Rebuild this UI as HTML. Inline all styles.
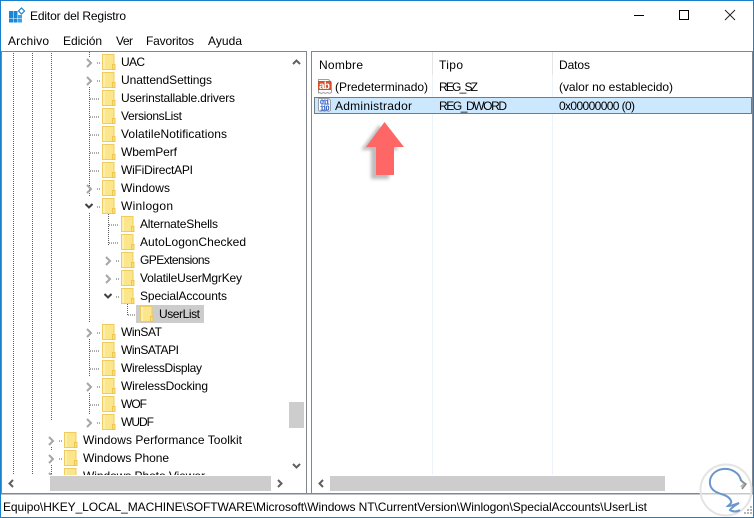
<!DOCTYPE html>
<html><head><meta charset="utf-8"><style>
html,body{margin:0;padding:0;background:#fff;overflow:hidden}
svg{display:block}
text{font-family:"Liberation Sans",sans-serif;font-size:12px;fill:#000}
.d{stroke:#5a5a5a;stroke-width:1;stroke-dasharray:1 1;fill:none;shape-rendering:crispEdges}
.c{fill:none;stroke:#a6a6a6;stroke-width:2}
.e{fill:none;stroke:#404040;stroke-width:2}
.s{fill:none;stroke:#606060;stroke-width:2}
</style></head><body>
<svg width="754" height="518" viewBox="0 0 754 518" xmlns="http://www.w3.org/2000/svg">
<defs>
<g id="f"><rect x=".5" y=".5" width="11.5" height="15" fill="#fce68c" stroke="#f0cb5e"/><rect x="1" y="1" width="2" height="14" fill="#fdefb0"/><rect x="10.500" y="10.500" width="2.500" height="5" fill="#fbe07a" stroke="#efc550"/></g>
<clipPath id="t"><rect x="2" y="52" width="304" height="423"/></clipPath>
<filter id="b" x="-30%" y="-30%" width="160%" height="160%"><feGaussianBlur stdDeviation="1.5"/></filter>
</defs>
<rect width="754" height="518" fill="#fff"/>

<!-- title bar -->
<g fill="#1b86d6"><rect x="9" y="11" width="4" height="4"/><rect x="13.500" y="11" width="4" height="4"/><rect x="9" y="15" width="4" height="3.500"/><rect x="13.500" y="15" width="4" height="3.500"/><rect x="18" y="15" width="4" height="3.500" fill="#3aa0e8"/><rect x="9" y="19" width="4" height="3.500"/><rect x="13.500" y="19" width="4" height="3.500"/><rect x="18" y="19" width="4" height="3.500" fill="#3aa0e8"/></g>
<path d="M21.500 8l3 3-3 3-3-3z" fill="#fff" stroke="#1b84cf" stroke-width="1.200"/>
<text x="30" y="20" textLength="96">Editor del Registro</text>
<path d="M634 15.500h10" stroke="#000" fill="none"/>
<rect x="679.500" y="10.500" width="9" height="9" fill="none" stroke="#000"/>
<path d="M725 10l10 10M735 10l-10 10" stroke="#222" fill="none"/>

<!-- menu -->
<text x="8" y="45" textLength="41">Archivo</text>
<text x="63" y="45" textLength="39">Edición</text>
<text x="116" y="45" textLength="17">Ver</text>
<text x="146" y="45" textLength="48">Favoritos</text>
<text x="208" y="45" textLength="34">Ayuda</text>

<!-- tree -->
<g clip-path="url(#t)">
<path class="d" d="M13.500 53V474M32.500 53V474M51.500 53V421M51.500 447v3M51.500 465v10"/>
<path class="d" d="M89.500 52v5M89.500 87v109M89.500 213v110M89.500 339v38M89.500 393v21"/>
<path class="d" d="M90 99h10M90 117h10M90 135h10M90 153h10M90 171h10M90 351h10M90 369h10M90 405h10"/>
<path class="d" d="M97 63h3M97 81h3M97 189h3M97 207h3M97 333h3M97 387h3M97 423h3M59 441h3M59 459h3"/>
<path class="d" d="M108.500 214v31M109 225h10M109 243h10M116 261h3M116 279h3M116 297h3"/>
<path class="d" d="M127.500 304v11M128 315h10"/>

<g>
<path class="c" d="M87 59l4 4-4 4M87 77l4 4-4 4M87 185l4 4-4 4M87 329l4 4-4 4M87 383l4 4-4 4M87 419l4 4-4 4M106 257l4 4-4 4M106 275l4 4-4 4M49 437l4 4-4 4M49 455l4 4-4 4M49 473l4 4-4 4"/>
<path class="e" d="M85.500 204l3.500 3.500 3.500-3.500M104.500 294l3.500 3.500 3.500-3.500"/>
</g>

<use href="#f" x="102" y="54"/><use href="#f" x="102" y="72"/><use href="#f" x="102" y="90"/><use href="#f" x="102" y="108"/><use href="#f" x="102" y="126"/><use href="#f" x="102" y="144"/><use href="#f" x="102" y="162"/><use href="#f" x="102" y="180"/><use href="#f" x="102" y="198"/>
<use href="#f" x="121" y="216"/><use href="#f" x="121" y="234"/><use href="#f" x="121" y="252"/><use href="#f" x="121" y="270"/><use href="#f" x="121" y="288"/>
<rect x="136" y="305" width="68" height="18" fill="#cccccc"/>
<use href="#f" x="140" y="306"/>
<use href="#f" x="102" y="324"/><use href="#f" x="102" y="342"/><use href="#f" x="102" y="360"/><use href="#f" x="102" y="378"/><use href="#f" x="102" y="396"/><use href="#f" x="102" y="414"/>
<use href="#f" x="64" y="432"/><use href="#f" x="64" y="450"/><use href="#f" x="64" y="468"/>

<text x="121" y="66" textLength="24">UAC</text>
<text x="121" y="84" textLength="91">UnattendSettings</text>
<text x="121" y="102" textLength="114">Userinstallable.drivers</text>
<text x="121" y="120" textLength="61">VersionsList</text>
<text x="121" y="138" textLength="106">VolatileNotifications</text>
<text x="121" y="156" textLength="56">WbemPerf</text>
<text x="121" y="174" textLength="72">WiFiDirectAPI</text>
<text x="121" y="192" textLength="49">Windows</text>
<text x="121" y="210" textLength="52">Winlogon</text>
<text x="140" y="228" textLength="78">AlternateShells</text>
<text x="140" y="246" textLength="106">AutoLogonChecked</text>
<text x="140" y="264" textLength="70">GPExtensions</text>
<text x="140" y="282" textLength="102">VolatileUserMgrKey</text>
<text x="140" y="300" textLength="87">SpecialAccounts</text>
<text x="159" y="318" textLength="41">UserList</text>
<text x="121" y="336" textLength="41">WinSAT</text>
<text x="121" y="354" textLength="58">WinSATAPI</text>
<text x="121" y="372" textLength="81">WirelessDisplay</text>
<text x="121" y="390" textLength="87">WirelessDocking</text>
<text x="121" y="408" textLength="26">WOF</text>
<text x="121" y="426" textLength="33">WUDF</text>
<text x="83" y="444" textLength="159">Windows Performance Toolkit</text>
<text x="83" y="462" textLength="86">Windows Phone</text>
<text x="83" y="480" textLength="122">Windows Photo Viewer</text>
</g>

<!-- tree scrollbars -->
<rect x="288" y="52" width="18" height="424" fill="#fff"/>
<rect x="2" y="475" width="304" height="18" fill="#fff"/>
<rect x="289" y="402" width="15" height="26" fill="#cdcdcd"/>
<rect x="50" y="476" width="221" height="15" fill="#cdcdcd"/>
<path class="s" d="M293 64l3.500-3.500 3.500 3.500M293 464l3.500 3.500 3.500-3.500M13 480l-3.500 3.500 3.500 3.500M278 480l3.500 3.500-3.500 3.500"/>

<!-- panel borders -->
<path d="M1.500 51.500H306.500V493.500M1.500 51V494" fill="none" stroke="#82878f"/>
<path d="M311.500 494V51.500H752.500V494" fill="none" stroke="#82878f"/>

<!-- list view -->
<path d="M432.500 52V75M552.500 52V75" stroke="#e5e5e5"/>
<path d="M432.500 75V475M552.500 75V475" stroke="#eef3f9"/>
<text x="319" y="69" textLength="44">Nombre</text>
<text x="439" y="69" textLength="24">Tipo</text>
<text x="559" y="69" textLength="31">Datos</text>

<path d="M318.500 79.500h10l3 3v10l-2 1-2-1-2 1-2-1-2 1-2-1-1 .5z" fill="#fff" stroke="#a0a0a0"/>
<rect x="318" y="81" width="13" height="9" fill="#d6502b"/>
<text x="319" y="89" style="font-size:10px;font-weight:bold;fill:#fff" textLength="11">ab</text>
<text x="335" y="91" textLength="93">(Predeterminado)</text>
<text x="439" y="91" textLength="39">REG_SZ</text>
<text x="559" y="91" textLength="114">(valor no establecido)</text>

<rect x="314" y="97" width="438" height="17" fill="#cce8ff"/>
<rect x="314.500" y="97.500" width="437" height="16" fill="none" stroke="#111" stroke-dasharray="1 1" shape-rendering="crispEdges"/>
<path d="M318.500 98.500h10l2 2v10l-2 1-2-1-2 1-2-1-2 1-2-1z" fill="#fff" stroke="#9aa0a8"/>
<text x="320" y="104.500" style="font-size:7px;font-weight:bold;fill:#1c4fc0" textLength="9.500">011</text>
<text x="320" y="110.500" style="font-size:7px;font-weight:bold;fill:#1c4fc0" textLength="9.500">110</text>
<text x="335" y="110" textLength="77">Administrador</text>
<text x="439" y="110" textLength="68">REG_DWORD</text>
<text x="559" y="110" textLength="76">0x00000000 (0)</text>

<!-- arrow -->
<path d="M379 125L361 150H371V179H389V150H399Z" fill="#9a9a9a" opacity=".65" filter="url(#b)"/>
<path d="M384.500 122L404 147H394V175H376V147H366Z" fill="#ff6666"/>

<!-- right h scrollbar -->
<rect x="330" y="476" width="335" height="15" fill="#cdcdcd"/>
<path class="s" d="M323 480l-3.500 3.500 3.500 3.500M741 480l3.500 3.500-3.500 3.500"/>

<!-- status bar -->
<rect x="1" y="493" width="752" height="1.500" fill="#82878f"/>
<text x="3" y="511" textLength="644">Equipo\HKEY_LOCAL_MACHINE\SOFTWARE\Microsoft\Windows NT\CurrentVersion\Winlogon\SpecialAccounts\UserList</text>
<path d="M744 514h2v-2h-2zM747 514h2v-2h-2zM750 514h2v-2h-2zM747 511h2v-2h-2zM750 511h2v-2h-2zM750 508h2v-2h-2z" fill="#b5b5b5"/>

<!-- window border -->
<path d="M.5 518V.5H753.500V518M0 517.500H754" fill="none" stroke="#1a80cc"/>

<!-- watermark -->
<circle cx="726" cy="490" r="25" fill="#fff" opacity=".55"/>
<circle cx="726" cy="490" r="25.500" fill="none" stroke="#e4e4e4" stroke-width="2"/>
<path d="M741 481c-1-8-10-13-18-12-8 1-14 7-13 15 1 7 8 9 14 11 3 1 6 3 7 6 1 2-1 3-3 5 4 0 8-2 11-3-3 2-7 4-9 7 3 2 7 2 10 0" fill="none" stroke="#6b97c8" stroke-width="2"/>
<path d="M741 481l5 3-4 5" fill="none" stroke="#8a8a8a" stroke-width="1.500"/>
</svg>
</body></html>
